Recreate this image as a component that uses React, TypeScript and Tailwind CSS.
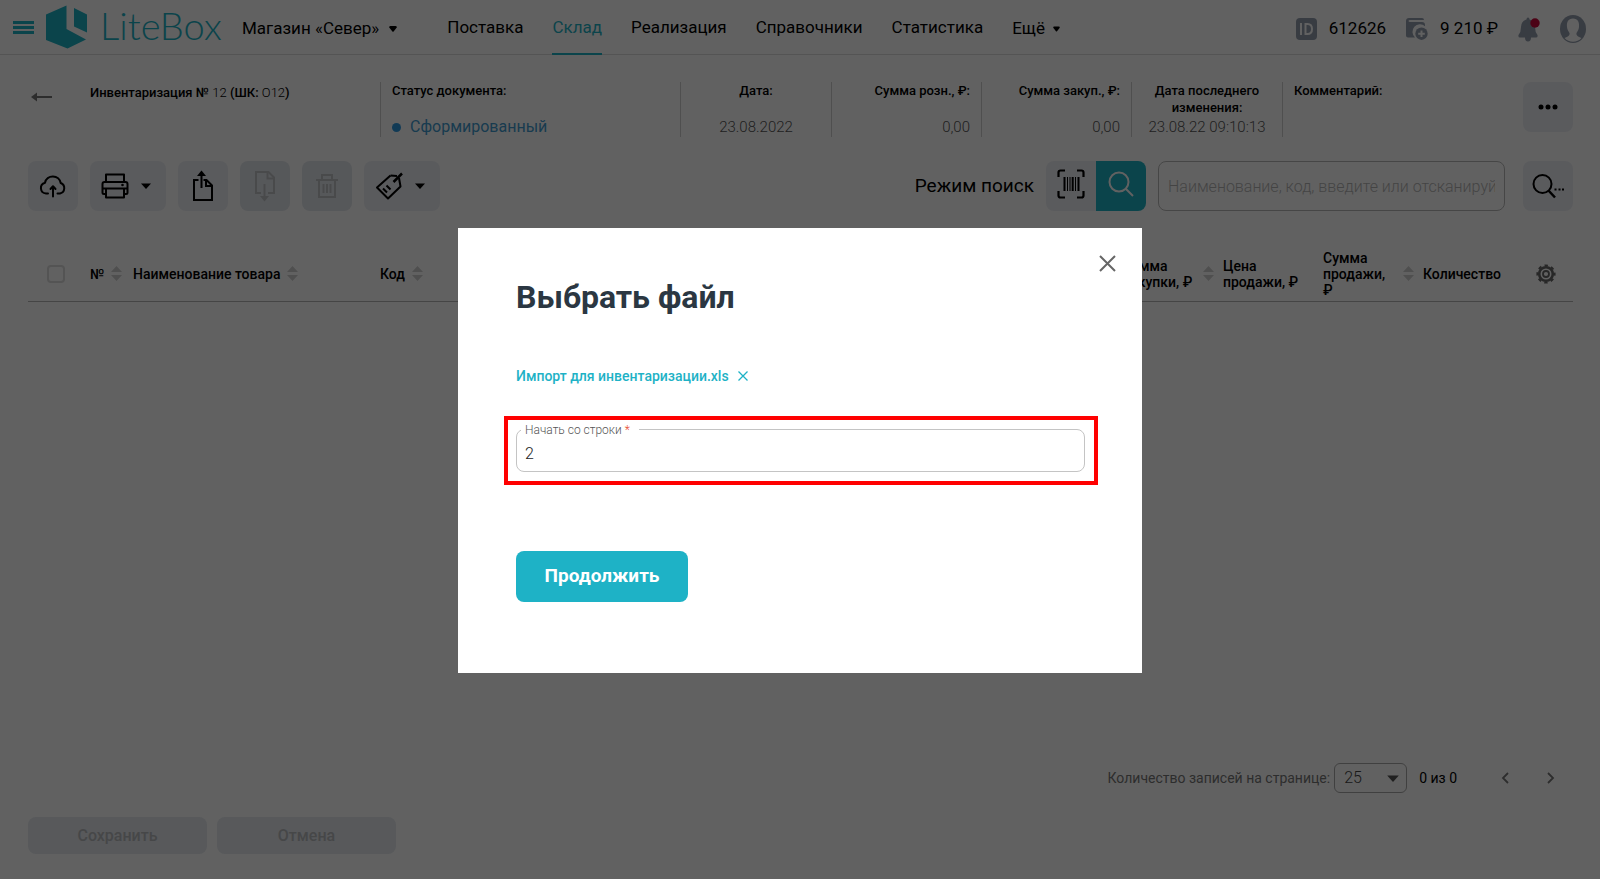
import { useState, type ReactNode } from "react";

const NAV = ["Поставка", "Склад", "Реализация", "Справочники", "Статистика"];

interface IconProps {
  className?: string;
}

function Caret({ className = "" }: IconProps) {
  return (
    <svg viewBox="0 0 10 6" className={className} fill="currentColor" aria-hidden="true">
      <path d="M0 0.500h10L5 6z" />
    </svg>
  );
}

function RoundCaret({ className = "" }: IconProps) {
  return (
    <svg viewBox="0 0 8 6" className={className} fill="currentColor" aria-hidden="true">
      <path d="M1.500 0H6.500Q8 0 7.700 1.500L4.600 5.500Q4 6.200 3.400 5.500L0.300 1.500Q0 0 1.500 0z" />
    </svg>
  );
}

function SortIcon() {
  return (
    <svg viewBox="0 0 11 15" className="h-[15px] w-[11px] shrink-0 text-[#cfcfcf]" fill="currentColor" aria-hidden="true">
      <path d="M5.500 0L11 6H0zM5.500 15L0 9h11z" />
    </svg>
  );
}

function LogoMark() {
  return (
    <svg viewBox="0 0 42 44" className="h-11 w-[42px]" fill="#1eb2c6" aria-hidden="true">
      <path d="M20.500 0.500V24L40 34.500L21.500 43.500L0 35V9.500z" />
      <path d="M28 3L41 9.500V27.500L28 21.500z" />
    </svg>
  );
}

function CloudIcon() {
  return (
    <svg viewBox="0 0 28 24" className="h-6 w-7" fill="none" stroke="currentColor" strokeWidth="2" strokeLinecap="round" strokeLinejoin="round">
      <path d="M9 19.500H7A5.500 5.500 0 0 1 6 8.700A8 8 0 0 1 21.700 9A5.500 5.500 0 0 1 21 19.500H18.500" />
      <path d="M14 22.500V13.500M11.500 15L14 12.200L16.500 15" />
    </svg>
  );
}

function PrinterIcon() {
  return (
    <svg viewBox="0 0 28 26" className="h-[26px] w-7" fill="none" stroke="currentColor" strokeWidth="2" strokeLinejoin="round">
      <path d="M5 9V1.500H23V9" />
      <path d="M5 21H3Q1.500 21 1.500 19.500V11Q1.500 9 3.500 9H24.500Q26.500 9 26.500 11V19.500Q26.500 21 25 21H23" />
      <path d="M5 15.500H23V24.500H5zM2 15.500H26" />
      <circle cx="21.500" cy="12" r="1.300" fill="currentColor" stroke="none" />
    </svg>
  );
}

function ExportIcon() {
  return (
    <svg viewBox="0 0 22 32" className="h-8 w-[22px]" fill="none" stroke="currentColor" strokeWidth="2">
      <path d="M6.500 10H2V30H20V15.500L14.500 10H11.500" />
      <path d="M14 10V16H20" />
      <path d="M9.500 18V3" />
      <path d="M5 6L9.500 0.500L14 6z" fill="currentColor" stroke="none" />
    </svg>
  );
}

function ImportIcon() {
  return (
    <svg viewBox="0 0 22 32" className="h-8 w-[22px]" fill="none" stroke="currentColor" strokeWidth="2">
      <path d="M7 23H2V2H14.500L20 7.500V23H14" />
      <path d="M13.500 2V8.500H20" />
      <path d="M10.500 14V29" />
      <path d="M6 26L10.500 31.500L15 26z" fill="currentColor" stroke="none" />
    </svg>
  );
}

function TrashIcon() {
  return (
    <svg viewBox="0 0 24 26" className="h-[26px] w-6" fill="none" stroke="currentColor" strokeWidth="2">
      <path d="M1 7H23M7 7V2H17V7M4 7V24H20V7" />
      <path d="M8.500 11V20M12 11V20M15.500 11V20" />
    </svg>
  );
}

function TagIcon() {
  return (
    <svg viewBox="0 0 28 28" className="h-7 w-7" fill="none" stroke="currentColor" strokeWidth="2" strokeLinejoin="round">
      <path d="M15.500 3.500L2 15.500L13 26.500L25.500 14.500L24 6" />
      <path d="M15.500 3.500L22 4" />
      <path d="M18.500 10L27 1.500" strokeWidth="2.500" />
      <path d="M8 16.500L12 20.500M11.500 13.500L15.500 17.500" />
    </svg>
  );
}

function BarcodeIcon() {
  return (
    <svg viewBox="0 0 28 30" className="h-[30px] w-7" fill="none" stroke="currentColor" strokeWidth="2.200">
      <path d="M1.500 8V3.500Q1.500 1.500 3.500 1.500H8M20 1.500H24.500Q26.500 1.500 26.500 3.500V8M26.500 22V26.500Q26.500 28.500 24.500 28.500H20M8 28.500H3.500Q1.500 28.500 1.500 26.500V22" />
      <path d="M7.500 8V22M21.500 8V22" strokeWidth="2" />
      <path d="M10.500 8V22M13 8V22M18.500 8V22" strokeWidth="1" />
      <path d="M15.700 8V22" strokeWidth="2" />
    </svg>
  );
}

function SearchIcon() {
  return (
    <svg viewBox="0 0 26 26" className="h-[26px] w-[26px]" fill="none" stroke="currentColor" strokeWidth="2">
      <circle cx="11" cy="11" r="9.500" />
      <path d="M17.500 17.500L25 25" />
    </svg>
  );
}

function SearchMoreIcon() {
  return (
    <svg viewBox="0 0 32 26" className="h-[26px] w-8" fill="none" stroke="currentColor" strokeWidth="2">
      <circle cx="10.500" cy="11" r="9" />
      <path d="M16.500 17.500L23 24.500" strokeWidth="2.500" />
      <path d="M22.500 16.500h2M26.500 16.500h2M30 16.500h2" />
    </svg>
  );
}

function GearIcon() {
  return (
    <svg viewBox="0 0 20 20" className="h-5 w-5" fill="none" stroke="currentColor" aria-hidden="true">
      <circle cx="10" cy="10" r="6.800" strokeWidth="2.600" />
      <circle cx="10" cy="10" r="8.600" strokeWidth="2" strokeDasharray="3.400 3.350" strokeDashoffset="1.700" />
      <circle cx="10" cy="10" r="3" strokeWidth="1.800" />
    </svg>
  );
}

function IdIcon() {
  return (
    <svg viewBox="0 0 21 22" className="h-[22px] w-[21px]" aria-hidden="true">
      <rect width="21" height="22" rx="4" fill="#939dad" />
      <path d="M5 5V17M9.500 6V16H11.500Q16 16 16 11Q16 6 11.500 6z" fill="none" stroke="#fff" strokeWidth="2" />
    </svg>
  );
}

function WalletIcon() {
  return (
    <svg viewBox="0 0 22 22" className="h-[22px] w-[22px]" fill="#939dad" aria-hidden="true">
      <path d="M0 3Q0 0 3 0H16Q18 0 18 2H4Q2.500 2 2.500 3Q2.500 4 4 4H16Q19 4 19 7V8.200A7.300 7.300 0 0 0 9 19.500H2Q0 19.500 0 17.500z" />
      <circle cx="15.500" cy="15.700" r="6.200" />
      <path d="M15.500 12.500V19M12.200 15.700H18.800" stroke="#fff" strokeWidth="2" />
    </svg>
  );
}

function BellIcon() {
  return (
    <svg viewBox="0 0 22 26" className="h-[26px] w-[22px]" aria-hidden="true">
      <path
        d="M10 1.500Q11.500 1.500 11.500 3.500Q17 5 17 11Q17 16 19.500 19Q20 21.500 18 21.500H13Q13 25.500 10 25.500Q7 25.500 7 21.500H2Q0 21.500 0.500 19Q3 16 3 11Q3 5 8.500 3.500Q8.500 1.500 10 1.500z"
        fill="#939dad"
      />
      <circle cx="17" cy="7" r="4.700" fill="#c9093c" />
    </svg>
  );
}

function AvatarIcon() {
  return (
    <svg viewBox="0 0 26 28" className="h-7 w-[26px]" aria-hidden="true">
      <ellipse cx="13" cy="14" rx="13" ry="14" fill="#939dad" />
      <path
        d="M13 3.500C8 3.500 6.500 7.500 7 12C7.300 15 8.500 16.500 9.500 18C10 20.500 8 21.500 4.500 23Q8 26.800 13 26.800Q18 26.800 21.500 23C18 21.500 16 20.500 16.500 18C17.500 16.500 18.700 15 19 12C19.500 7.500 18 3.500 13 3.500z"
        fill="#fff"
      />
    </svg>
  );
}

interface ToolButtonProps {
  label: string;
  menu?: boolean;
  disabled?: boolean;
  children: ReactNode;
}

function ToolButton({ label, menu, disabled, children }: ToolButtonProps) {
  return (
    <button
      aria-label={label}
      disabled={disabled}
      className={`flex h-[50px] items-center justify-center rounded-lg ${menu ? "w-[76px] gap-3 pr-1" : "w-[50px]"} ${
        disabled ? "bg-[#e3e7ec] text-[#bfc2c6]" : "bg-[#edeff5] text-black"
      }`}
    >
      {children}
      {menu && <Caret className="h-[6px] w-[10px]" />}
    </button>
  );
}

function Header() {
  return (
    <header className="flex h-[55px] shrink-0 items-center border-b border-[#dcdcdc] pr-[14px] pl-[13px] text-[17px]">
      <button aria-label="Меню" className="flex w-[21px] flex-col gap-[2px]">
        <span className="h-[3px] bg-[#1eb2c6]" />
        <span className="h-[3px] bg-[#1eb2c6]" />
        <span className="h-[3px] bg-[#1eb2c6]" />
      </button>
      <a href="#" className="ml-3 flex items-center gap-3">
        <LogoMark />
        <span className="w-[118px] pb-1 font-['Lato',sans-serif] text-[38px] leading-10 font-light text-[#1eb2c6]">
          LiteBox
        </span>
      </a>
      <button className="ml-6 flex items-center gap-[10px] pt-1 whitespace-nowrap">
        Магазин «Север»
        <RoundCaret className="h-[6px] w-2" />
      </button>
      <nav className="ml-[50px] flex h-full items-center gap-[29px]">
        {NAV.map((item) => (
          <a
            key={item}
            href="#"
            className={`flex h-[55px] items-center border-b-2 pt-1 ${
              item === "Склад" ? "border-[#1eb2c6] text-[#1eb2c6]" : "border-transparent"
            }`}
          >
            {item}
          </a>
        ))}
        <button className="flex items-center gap-2 pt-1">
          Ещё
          <RoundCaret className="h-[6px] w-[7px]" />
        </button>
      </nav>
      <div className="ml-auto flex items-center pt-1">
        <IdIcon />
        <span className="ml-3">612626</span>
        <span className="ml-5">
          <WalletIcon />
        </span>
        <span className="ml-3">9 210 ₽</span>
        <button aria-label="Уведомления" className="ml-5">
          <BellIcon />
        </button>
        <button aria-label="Профиль" className="ml-5">
          <AvatarIcon />
        </button>
      </div>
    </header>
  );
}

interface InfoProps {
  label: string;
  value?: ReactNode;
  className: string;
}

function Info({ label, value, className }: InfoProps) {
  return (
    <div className={`flex h-[55px] flex-col justify-between border-l border-[#cfcfcf] px-[11px] ${className}`}>
      <span className="text-[13px] leading-[17px] font-medium">{label}</span>
      <span className="text-[15px] leading-5 font-light text-[#555]">{value}</span>
    </div>
  );
}

function DocumentBar() {
  return (
    <section className="mt-[27px] flex">
      <div className="flex w-[352px] shrink-0 items-start pl-[3px]">
        <button aria-label="Назад" className="mt-[10px]">
          <svg viewBox="0 0 21 10" className="h-[10px] w-[21px] text-[#777]">
            <path d="M6 0.500V9.500L0 5z" fill="currentColor" />
            <path d="M5 5H21" stroke="currentColor" strokeWidth="2" />
          </svg>
        </button>
        <h1 className="mt-[2px] ml-[38px] text-[13px] leading-[18px] font-medium">
          Инвентаризация № <span className="font-light">12</span> (ШК: <span className="font-light">О12</span>)
        </h1>
      </div>
      <Info
        label="Статус документа:"
        className="w-[300px]"
        value={
          <span className="flex items-center gap-[9px] text-[16px] font-normal text-[#3f9bd0]">
            <span className="h-[9px] w-[9px] rounded-full bg-[#2f9ae0]" />
            Сформированный
          </span>
        }
      />
      <Info label="Дата:" value="23.08.2022" className="w-[151px] text-center" />
      <Info label="Сумма розн., ₽:" value="0,00" className="w-[150px] text-right" />
      <Info label="Сумма закуп., ₽:" value="0,00" className="w-[150px] text-right" />
      <Info label="Дата последнего изменения:" value="23.08.22 09:10:13" className="w-[151px] text-center" />
      <Info label="Комментарий:" className="flex-1" />
      <ToolButton label="Ещё действия">
        <svg viewBox="0 0 20 6" className="h-[6px] w-5" fill="currentColor">
          <circle cx="3" cy="3" r="2.500" />
          <circle cx="10" cy="3" r="2.500" />
          <circle cx="17" cy="3" r="2.500" />
        </svg>
      </ToolButton>
    </section>
  );
}

function Toolbar() {
  return (
    <section className="mt-6 flex items-center gap-3">
      <ToolButton label="Загрузить">
        <CloudIcon />
      </ToolButton>
      <ToolButton label="Печать" menu>
        <PrinterIcon />
      </ToolButton>
      <ToolButton label="Экспорт">
        <ExportIcon />
      </ToolButton>
      <ToolButton label="Импорт" disabled>
        <ImportIcon />
      </ToolButton>
      <ToolButton label="Удалить" disabled>
        <TrashIcon />
      </ToolButton>
      <ToolButton label="Ценники" menu>
        <TagIcon />
      </ToolButton>

      <span className="ml-auto text-[19px]">Режим поиск</span>
      <div className="flex overflow-hidden rounded-lg">
        <button aria-label="Сканер" className="flex h-[50px] w-[50px] items-center justify-center bg-[#edeff5] pb-1">
          <BarcodeIcon />
        </button>
        <button aria-label="Поиск" className="flex h-[50px] w-[50px] items-center justify-center bg-[#1eb2c6] pb-1 text-white">
          <SearchIcon />
        </button>
      </div>
      <input
        type="text"
        aria-label="Поиск товара"
        placeholder="Наименование, код, введите или отсканируйте"
        className="mr-[6px] h-[50px] w-[347px] rounded-lg border border-[#b9b9b9] px-[9px] text-[16px] font-light outline-none placeholder:text-[#b4b4b4]"
      />
      <ToolButton label="Расширенный поиск">
        <SearchMoreIcon />
      </ToolButton>
    </section>
  );
}

function Column({ children, sort }: { children: ReactNode; sort?: boolean }) {
  return (
    <th scope="col" className="pr-[3px] pl-[6px] text-left font-medium">
      <div className="flex items-center gap-[7px]">
        <span>{children}</span>
        {sort && <SortIcon />}
      </div>
    </th>
  );
}

function GoodsTable() {
  return (
    <table className="mt-9 w-full table-fixed border-collapse text-[14px] leading-4">
      <colgroup>
        <col className="w-14" />
        <col className="w-[43px]" />
        <col className="w-[247px]" />
        <col className="w-[100px]" />
        <col />
        <col className="w-[100px]" />
        <col className="w-[100px]" />
        <col className="w-[100px]" />
        <col className="w-[113px]" />
        <col className="w-[43px]" />
      </colgroup>
      <thead>
        <tr className="h-[54px] border-b border-[#b5b5b5]">
          <th scope="col" className="pl-[19px] text-left">
            <input
              type="checkbox"
              aria-label="Выбрать все"
              className="block h-[18px] w-[18px] appearance-none rounded border-2 border-[#dcdcdc]"
            />
          </th>
          <Column sort>№</Column>
          <Column sort>Наименование товара</Column>
          <Column sort>Код</Column>
          <th />
          <Column sort>Сумма закупки, ₽</Column>
          <Column>Цена продажи, ₽</Column>
          <Column sort>Сумма продажи, ₽</Column>
          <Column>Количество</Column>
          <th className="pl-[6px] text-left">
            <button aria-label="Настройка колонок" className="block text-[#666]">
              <GearIcon />
            </button>
          </th>
        </tr>
      </thead>
    </table>
  );
}

function Pagination() {
  return (
    <div className="flex items-center justify-end pr-[18px] text-[14px]">
      <label htmlFor="page-size" className="text-[#777]">
        Количество записей на странице:
      </label>
      <div className="relative ml-1">
        <select
          id="page-size"
          className="block h-[30px] w-[73px] appearance-none rounded-md border border-[#a9a9a9] px-[9px] text-[16px] leading-6 font-light text-[#444]"
        >
          <option>25</option>
        </select>
        <Caret className="pointer-events-none absolute top-3 right-2 h-[7px] w-3 text-[#555]" />
      </div>
      <span className="ml-3">0 из 0</span>
      <button aria-label="Предыдущая страница" className="ml-[44px] text-[#777]">
        <svg viewBox="0 0 8 12" className="h-3 w-2" fill="none" stroke="currentColor" strokeWidth="1.800">
          <path d="M7 1L2 6L7 11" />
        </svg>
      </button>
      <button aria-label="Следующая страница" className="ml-[38px] text-[#777]">
        <svg viewBox="0 0 8 12" className="h-3 w-2" fill="none" stroke="currentColor" strokeWidth="1.800">
          <path d="M1 1L6 6L1 11" />
        </svg>
      </button>
    </div>
  );
}

function FileDialog() {
  const [startRow, setStartRow] = useState("2");

  return (
    <div className="fixed inset-0 flex items-start justify-center bg-black/62 pt-[228px]">
      <div role="dialog" aria-labelledby="dialog-title" className="relative w-[684px] bg-white px-[58px] pt-[49px] pb-[71px]">
        <button aria-label="Закрыть" className="absolute top-[27px] right-[26px] text-[#666]">
          <svg viewBox="0 0 17 17" className="h-[17px] w-[17px]" fill="none" stroke="currentColor" strokeWidth="2">
            <path d="M1 1L16 16M16 1L1 16" />
          </svg>
        </button>

        <h2 id="dialog-title" className="text-[32px] leading-10 font-bold text-[#2b3742]">
          Выбрать файл
        </h2>

        <div className="mt-[49px] flex items-center gap-[9px] text-[14px] leading-5 font-medium text-[#1eb2c6]">
          <a href="#">Импорт для инвентаризации.xls</a>
          <button aria-label="Убрать файл">
            <svg viewBox="0 0 10 10" className="h-[10px] w-[10px]" fill="none" stroke="currentColor" strokeWidth="1.300">
              <path d="M0.500 0.500L9.500 9.500M9.500 0.500L0.500 9.500" />
            </svg>
          </button>
        </div>

        {/* Start row, outlined */}
        <div className="-mr-[14px] -ml-3 mt-[30px] border-4 border-[#ff0000] py-[9px] pr-[9px] pl-2">
          <div className="relative">
            <label
              htmlFor="start-row"
              className="absolute -top-[7px] left-[5px] bg-white pr-[9px] pl-1 text-[12px] leading-4 font-light text-[#555]"
            >
              Начать со строки <span className="text-[#e8472b]">*</span>
            </label>
            <input
              id="start-row"
              type="text"
              value={startRow}
              onChange={(e) => setStartRow(e.target.value)}
              className="block h-[43px] w-full rounded-lg border border-[#c4c4c4] px-2 pt-[6px] text-[16px] font-light text-[#222] outline-none"
            />
          </div>
        </div>

        <button className="mt-[66px] h-[51px] w-[172px] rounded-lg bg-[#1eb2c6] text-[19px] font-bold text-white">
          Продолжить
        </button>
      </div>
    </div>
  );
}

export default function App() {
  return (
    <div className="flex min-h-screen flex-col bg-white font-['Roboto',sans-serif] text-black">
      <Header />
      <main className="flex flex-1 flex-col pr-[27px] pb-[25px] pl-7">
        <DocumentBar />
        <Toolbar />
        <GoodsTable />
        <div className="mt-auto">
          <Pagination />
          <div className="mt-6 flex gap-[10px] text-[16px] font-medium text-[#b9bbbe]">
            <button disabled className="h-[37px] w-[179px] rounded-lg bg-[#e6eaef]">
              Сохранить
            </button>
            <button disabled className="h-[37px] w-[179px] rounded-lg bg-[#e6eaef]">
              Отмена
            </button>
          </div>
        </div>
      </main>
      <FileDialog />
    </div>
  );
}
